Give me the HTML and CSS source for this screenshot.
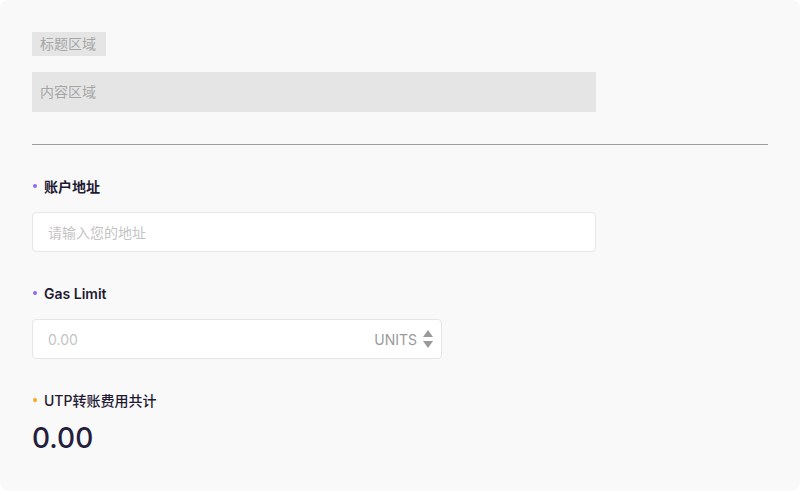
FILE: index.html
```html
<!DOCTYPE html>
<html lang="zh">
<head>
<meta charset="utf-8">
<link rel="stylesheet" href="styles.css">
</head>
<body>
<div class="card">
  <div class="title-box">标题区域</div>
  <div class="content-box">内容区域</div>
  <hr class="divider">
  <div class="field">
    <div class="label"><span class="dot purple"></span>账户地址</div>
    <div class="input wide"><span class="placeholder">请输入您的地址</span></div>
  </div>
  <div class="field">
    <div class="label"><span class="dot purple"></span>Gas Limit</div>
    <div class="input narrow">
      <span class="placeholder num">0.00</span>
      <span class="suffix">UNITS
        <svg class="spinner" width="10" height="20" viewBox="0 0 10 20"><path d="M5 1 L10 8 L0 8 Z" fill="#9a9a9a"/><path d="M0 12 L10 12 L5 19 Z" fill="#9a9a9a"/></svg>
      </span>
    </div>
  </div>
  <div class="field total">
    <div class="label"><span class="dot orange"></span>UTP转账费用共计</div>
    <div class="amount">0.00</div>
  </div>
</div>
</body>
</html>
```
FILE: styles.css
```css
html, body {
  margin: 0;
  padding: 0;
  background: #ffffff;
}
body {
  font-family: "Inter", "Noto Sans CJK SC", sans-serif;
  width: 800px;
  height: 491px;
}
.card {
  box-sizing: border-box;
  width: 800px;
  height: 491px;
  background: #f9f9f9;
  border-radius: 8px;
  padding: 32px;
  display: flex;
  flex-direction: column;
  align-items: flex-start;
}
.title-box {
  background: #e5e5e5;
  color: #a6a6a6;
  font-size: 14px;
  line-height: 24px;
  height: 24px;
  padding: 0 10px 0 8px;
}
.content-box {
  margin-top: 16px;
  box-sizing: border-box;
  width: 564px;
  height: 40px;
  background: #e5e5e5;
  color: #a6a6a6;
  font-size: 14px;
  line-height: 40px;
  padding: 0 8px;
}
.divider {
  margin: 32px 0 0;
  width: 736px;
  border: 0;
  border-top: 1px solid #9e9e9e;
  height: 0;
}
.field {
  margin-top: 31px;
  display: flex;
  flex-direction: column;
  gap: 16px;
}
.label {
  display: flex;
  align-items: center;
  height: 20px;
  font-size: 14px;
  font-weight: 600;
  color: #1e1a33;
}
.total .label {
  font-weight: 500;
}
.dot {
  width: 4px;
  height: 4px;
  border-radius: 50%;
  margin: 0 7px 0 1px;
}
.purple { background: #8b6cf0; }
.orange { background: #f5a623; }
.input {
  box-sizing: border-box;
  height: 40px;
  background: #ffffff;
  border: 1px solid #e6e6e6;
  border-radius: 4px;
  display: flex;
  align-items: center;
  justify-content: space-between;
  padding: 0 8px 0 15px;
  font-size: 14px;
}
.wide { width: 564px; }
.narrow { width: 410px; }
.placeholder {
  color: #c4c4c4;
}
.suffix {
  display: flex;
  align-items: center;
  gap: 6px;
  color: #9a9a9a;
}
.spinner {
  display: block;
}
.total {
  gap: 10px;
}
.amount {
  font-size: 28px;
  line-height: 36px;
  font-weight: 500;
  color: #231f3d;
}
```
